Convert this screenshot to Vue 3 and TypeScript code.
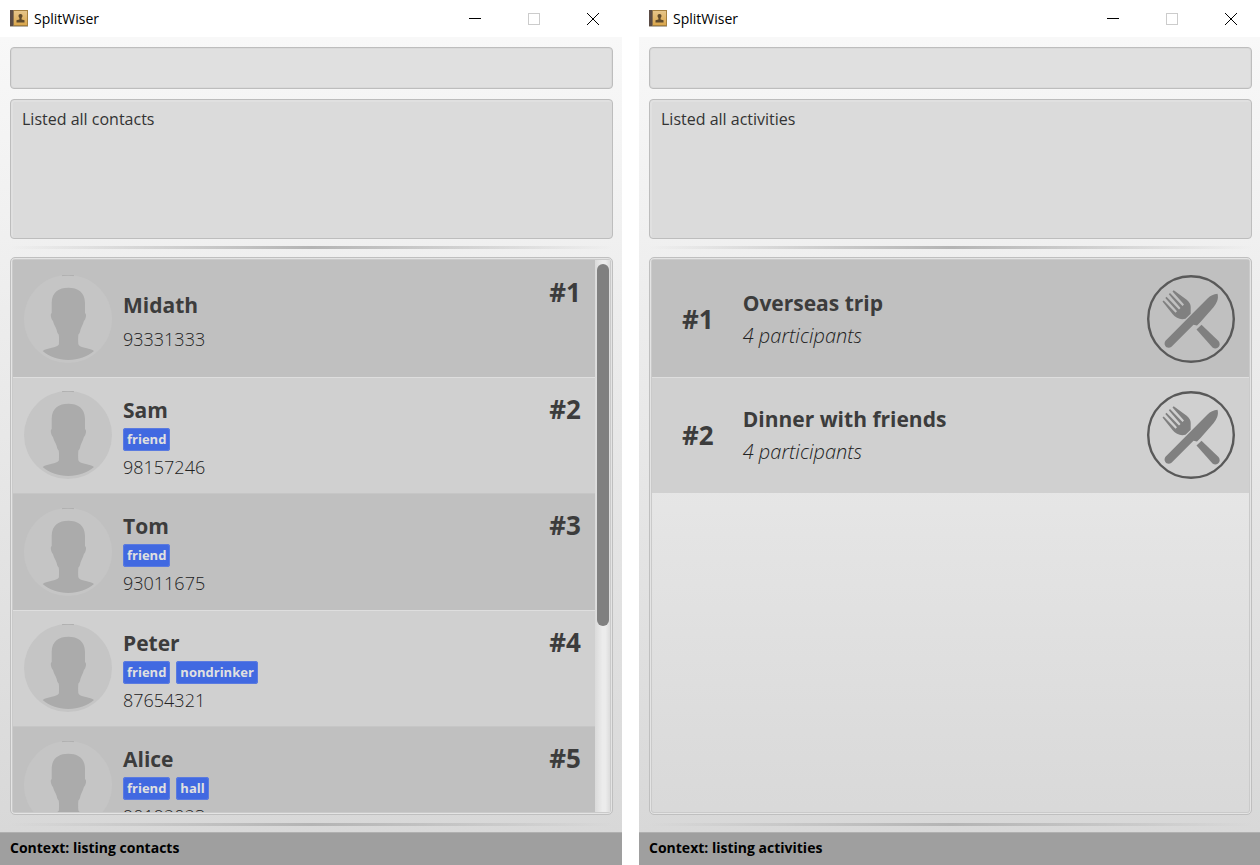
<script setup lang="ts">
interface Contact {
  id: number
  name: string
  tags: string[]
  phone: string
}

interface Activity {
  id: number
  title: string
  participants: number
}

const contacts: Contact[] = [
  { id: 1, name: 'Midath', tags: [], phone: '93331333' },
  { id: 2, name: 'Sam', tags: ['friend'], phone: '98157246' },
  { id: 3, name: 'Tom', tags: ['friend'], phone: '93011675' },
  { id: 4, name: 'Peter', tags: ['friend', 'nondrinker'], phone: '87654321' },
  { id: 5, name: 'Alice', tags: ['friend', 'hall'], phone: '90192023' },
]

const activities: Activity[] = [
  { id: 1, title: 'Overseas trip', participants: 4 },
  { id: 2, title: 'Dinner with friends', participants: 4 },
]

const windows = [
  { kind: 'contacts', result: 'Listed all contacts', context: 'Context: listing contacts' },
  { kind: 'activities', result: 'Listed all activities', context: 'Context: listing activities' },
]
</script>

<template>
  <main class="desktop">
    <section v-for="w in windows" :key="w.kind" class="window" :class="w.kind">
      <header class="titlebar">
        <svg class="app-icon" viewBox="0 0 18 17" aria-hidden="true">
          <defs>
            <linearGradient :id="'cover-' + w.kind" x1="0" y1="0" x2="0" y2="1">
              <stop offset="0" stop-color="#e6c58a" />
              <stop offset="1" stop-color="#dba74c" />
            </linearGradient>
          </defs>
          <rect x="0" y="0" width="18" height="16" fill="#a5803f" />
          <rect x="4" y="1" width="13" height="14" :fill="'url(#cover-' + w.kind + ')'" />
          <rect x="0" y="0" width="3" height="16" fill="#5a4b45" />
          <rect x="3" y="0" width="1" height="16" fill="#8c7450" />
          <rect x="0" y="16" width="18" height="1" fill="#b9b3a8" />
          <path d="M10.500 4c1.400 0 2 .8 2 2 0 .9-.6 1.500-.9 2v1.400l2.900.8V12.500h-8v-2.300l2.900-.8V8c-.3-.5-.9-1.100-.9-2 0-1.200.6-2 2-2z" fill="#5f4a2c" />
        </svg>
        <h1>SplitWiser</h1>
        <div class="controls">
          <button type="button" aria-label="Minimize">
            <svg viewBox="0 0 12 12"><path d="M0 5.500h12" stroke="#000" /></svg>
          </button>
          <button type="button" aria-label="Maximize" disabled>
            <svg viewBox="0 0 12 12"><rect x=".5" y=".5" width="11" height="11" fill="none" stroke="#ccc" /></svg>
          </button>
          <button type="button" aria-label="Close">
            <svg viewBox="0 0 12 12"><path d="M0 0l12 12M12 0L0 12" stroke="#000" /></svg>
          </button>
        </div>
      </header>

      <div class="content">
        <input class="command" type="text" aria-label="Command" />
        <textarea class="result" readonly aria-label="Result" :value="w.result"></textarea>
        <hr class="divider" />
        <div class="list-frame">
          <ul v-if="w.kind === 'contacts'" class="list">
            <li v-for="c in contacts" :key="c.id" class="row">
              <svg class="avatar" viewBox="0 0 88 88" aria-hidden="true">
                <circle cx="44" cy="44" r="44" fill="#c5c5c5" />
                <path d="M38 .6q6-.6 12 0" fill="none" stroke="#b0b0b0" />
                <path
                  d="M44.300 12.700C35 12.700 27.700 17 27.700 28v10c-1.500 1-.9 3.500-.3 5.300.5 1.500 1 2.200 1.600 2.700.9 4 3 6 3.700 9 .3 2.300 1 3.500 2 4.500.5 3 .4 6 .2 9.500-.3 2.200-3.300 2.700-6 3.500-4 1-8 1.700-10.200 3.500C25 81.500 34 85 44.300 85S63.500 81.500 70 76c-2.300-1.800-6.200-2.500-10.200-3.500-2.700-.8-5.200-1.500-5.500-3.500-.2-3.500-.3-6.500.1-9.500 1-1 1.700-2.200 2-4.500.7-3 2.500-5 3.500-9 .6-.5 1.100-1.200 1.600-2.700.6-1.800 1-4.300-.5-5.300V28C61 17 53.600 12.700 44.300 12.700z"
                  fill="#ababab"
                />
              </svg>
              <div class="details">
                <h2>{{ c.name }}</h2>
                <div class="tags">
                  <span v-for="t in c.tags" :key="t" class="tag">{{ t }}</span>
                </div>
                <p class="phone">{{ c.phone }}</p>
              </div>
              <span class="index">#{{ c.id }}</span>
            </li>
          </ul>
          <ul v-else class="list">
            <li v-for="a in activities" :key="a.id" class="row">
              <span class="index">#{{ a.id }}</span>
              <div class="details">
                <h2>{{ a.title }}</h2>
                <p class="participants">{{ a.participants }} participants</p>
              </div>
              <svg class="meal" viewBox="0 0 88 88" aria-hidden="true">
                <circle cx="44" cy="44" r="42.800" fill="none" stroke="#595959" stroke-width="2.400" />
                <g fill="#808080">
                  <path
                    d="M26.700 15.300L39.700 24.700Q43.700 28 43.700 32V38.700L38.500 43.700Q34 45 30 42.700 27 41 25.500 39L15.500 26.500l1.200-1L28.500 37.800l1.500-1.500L18.300 23l1.200-1.200L32 34.500l1.500-1.500L21.800 19.300l1.200-1.200L35.500 31l1.500-1.500L25.500 16.500z"
                  />
                  <path d="M49.500 54.500l5-4.800L71.500 66c3.500 4.500-1.500 9.500-6 6.500z" />
                  <path d="M70.500 18.700c1.500 5-1 9.500-4 13.500L53.500 47l-3.500 3.500-3.500-.8L24.500 71.800c-4 3-9-1.300-6-6L60.500 23.500c3-3 6-4.500 10-4.800z" />
                </g>
              </svg>
            </li>
          </ul>
          <div v-if="w.kind === 'contacts'" class="track" aria-hidden="true">
            <div class="thumb"></div>
          </div>
        </div>
        <hr class="divider bottom" />
      </div>

      <footer class="status">{{ w.context }}</footer>
    </section>
  </main>
</template>

<style>
body {
  margin: 0;
  background: #fff;
}
</style>

<style scoped>
.desktop {
  display: grid;
  grid-template-columns: 622fr 621fr;
  gap: 17px;
  height: 100vh;
  font-family: "Open Sans", "Noto Sans", sans-serif;
  color: #3c3c3c;
}
.window {
  display: flex;
  flex-direction: column;
  min-width: 0;
  min-height: 0;
}
.titlebar {
  display: flex;
  align-items: center;
  height: 37px;
  padding-left: 10px;
  background: #fff;
  color: #000;
}
.app-icon {
  width: 18px;
  height: 17px;
}
h1 {
  margin: 0 0 0 6px;
  font-size: 14px;
  font-weight: 400;
}
.controls {
  display: flex;
  margin-left: auto;
}
.controls button {
  display: flex;
  align-items: center;
  justify-content: center;
  width: 59px;
  height: 36px;
  padding: 0;
  border: 0;
  background: none;
}
.controls svg {
  width: 12px;
  height: 12px;
}
.content {
  display: flex;
  flex: 1;
  flex-direction: column;
  min-height: 0;
  padding: 10px 9px 0 10px;
  background: linear-gradient(#f8f8f8, #d8d8d8);
}
.activities .content {
  padding-right: 8px;
}
.command,
.result {
  box-sizing: border-box;
  flex: none;
  width: 100%;
  margin: 0;
  border: 1px solid #bdbdbd;
  border-radius: 4px;
  outline: 0;
  color: #333;
  font-family: inherit;
  font-size: 16px;
  line-height: 22px;
}
.command {
  height: 42px;
  padding: 0 12px;
  background: #e0e0e0;
  box-shadow: inset 0 0 0 1px #d9d9d9;
}
.result {
  height: 140px;
  margin-top: 10px;
  padding: 8px 11px;
  background: #dbdbdb;
  box-shadow: inset 1px 1px 0 1px #e0e0e0;
  resize: none;
}
.divider {
  flex: none;
  width: 100%;
  height: 3px;
  margin: 7px 0 8px;
  border: 0;
  background: linear-gradient(90deg, transparent, #b4b4b4 50%, transparent);
}
.divider.bottom {
  margin: 8px 0 6px;
}
.list-frame {
  display: flex;
  flex: 1;
  min-height: 0;
  padding: 2px;
  border: 1px solid #bfbfbf;
  border-radius: 5px;
  box-shadow: inset 0 0 0 1px #e4e4e4, inset 0 0 0 2px #cacaca;
}
.list {
  flex: 1;
  min-width: 0;
  margin: 0;
  padding: 0;
  overflow: hidden;
  list-style: none;
}
.row {
  display: flex;
  box-sizing: border-box;
  align-items: center;
  height: 117px;
  padding: 0 14px 0 11px;
  background: #c0c0c0;
}
.row:nth-child(even) {
  height: 116px;
  background: #d0d0d0;
  box-shadow: inset 0 1px #dedede;
}
.row:nth-child(n + 3):nth-child(odd) {
  box-shadow: inset 0 1px #c6c6c6;
}
.avatar,
.meal {
  flex: none;
  width: 88px;
  height: 88px;
}
.details {
  flex: 1;
  margin-left: 11px;
}
h2,
p {
  margin: 0;
}
h2 {
  font-size: 21px;
  font-weight: 700;
  line-height: 34px;
}
.tags {
  display: flex;
  gap: 6px;
  margin: 1px 0 2px;
}
.tag {
  padding: 0 4px;
  border-radius: 3px;
  background: #4169e1;
  box-shadow: inset 0 0 0 1px #5b7be0;
  color: #e0e0e0;
  font-size: 13px;
  font-weight: 700;
  line-height: 23px;
}
.contacts .details {
  padding-top: 3px;
}
.phone {
  color: #222;
  font-size: 18px;
  font-weight: 300;
  line-height: 28px;
}
.participants {
  color: #222;
  font-size: 20px;
  font-style: italic;
  font-weight: 300;
  line-height: 32px;
}
.index {
  font-size: 26px;
  font-weight: 700;
  line-height: 36px;
}
.contacts .index {
  align-self: flex-start;
  padding-top: 14px;
}
.activities .row {
  padding: 0 14px 0 30px;
}
.activities .details {
  margin-left: 29px;
}
.track {
  flex: none;
  width: 15px;
  padding-top: 4px;
  background: linear-gradient(90deg, #dadada, #ececec 50%, #ececec 70%, #dcdcdc);
}
.thumb {
  width: 12px;
  height: 66%;
  margin: 0 auto;
  border-radius: 6px;
  background: #808080;
}
.status {
  box-sizing: border-box;
  height: 33px;
  padding: 0 10px;
  border-top: 1px solid #b0b0b0;
  background: #9f9f9f;
  color: #000;
  font-size: 14px;
  font-weight: 700;
  line-height: 30px;
}
</style>
